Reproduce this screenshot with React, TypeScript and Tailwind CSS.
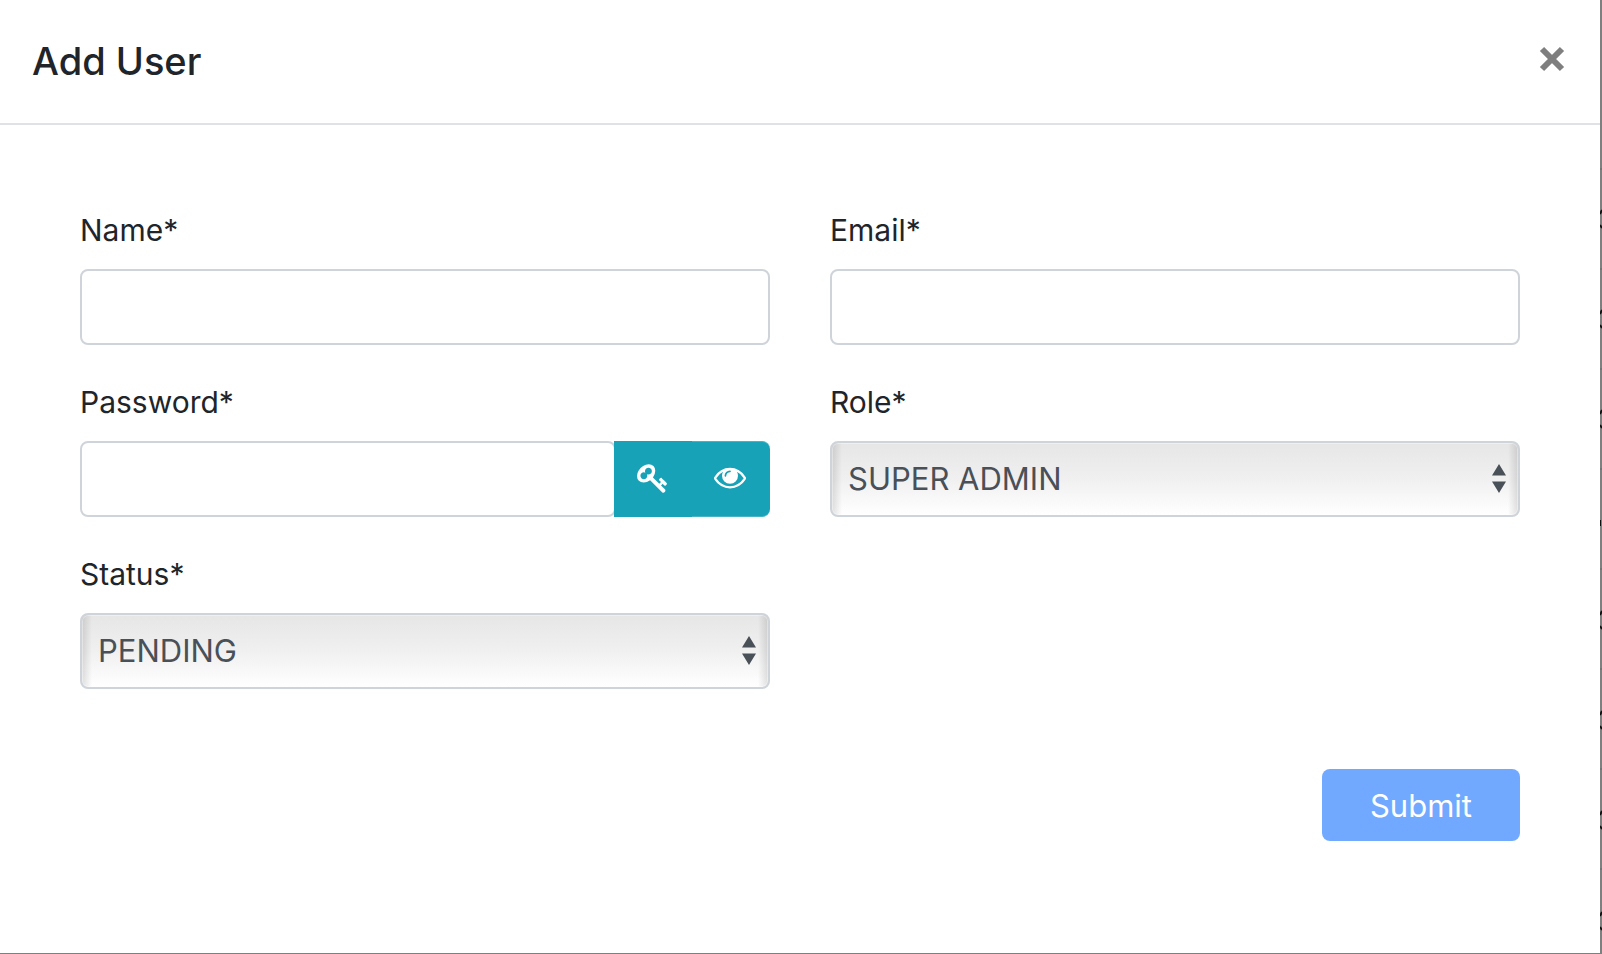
import { useState } from "react";
import type { ReactNode } from "react";

const control =
  "h-[76px] w-full min-w-0 rounded-lg border-2 border-[#ced4da] bg-white px-4 text-[31px] text-[#495057] outline-none";

function Field({ id, label, children }: { id: string; label: string; children: ReactNode }) {
  return (
    <div className="flex flex-col gap-3.5">
      <label htmlFor={id} className="text-[30px] leading-[50px]">
        {label}
      </label>
      {children}
    </div>
  );
}

function Select({ id, options }: { id: string; options: string[] }) {
  return (
    <div className="grid items-center">
      <select
        id={id}
        className="col-start-1 row-start-1 h-[76px] w-full appearance-none rounded-lg border-2 border-[#ced4da] bg-[linear-gradient(to_right,rgba(0,0,0,0.12),transparent_10px,transparent_calc(100%-10px),rgba(0,0,0,0.12)),linear-gradient(to_bottom,#e6e6e6,#f0f0f0_50%,#ffffff)] px-4 text-[31px] text-[#495057] shadow-[inset_0_0_0_1px_rgba(255,255,255,0.4)] outline-none"
      >
        {options.map((o) => (
          <option key={o}>{o}</option>
        ))}
      </select>
      <svg
        viewBox="0 0 14 29"
        aria-hidden="true"
        className="pointer-events-none col-start-1 row-start-1 mr-3.5 mb-0.5 h-[29px] w-3.5 justify-self-end fill-[#495057]"
      >
        <path d="M7 0 14 11.5H0zM7 29 14 17.5H0z" />
      </svg>
    </div>
  );
}

function KeyIcon() {
  return (
    <svg viewBox="0 0 1792 1792" className="h-8 w-8 fill-current" aria-hidden="true">
      <path d="M832 512q0-80-56-136t-136-56-136 56-56 136q0 42 19 83-41-19-83-19-80 0-136 56t-56 136 56 136 136 56 136-56 56-136q0-42-19-83 41 19 83 19 80 0 136-56t56-136zm851 704q0 17-49 66t-66 49q-9 0-28.5-16t-36.5-33-38.5-40-24.5-26l-96 96 220 220q28 28 28 68 0 42-39 81t-81 39q-40 0-68-28l-671-671q-176 131-365 131-163 0-265.5-102.5t-102.5-265.5q0-160 95-313t248-248 313-95q163 0 265.5 102.5t102.5 265.5q0 189-131 365l355 355 96-96q-3-3-26-24.5t-40-38.5-33-36.5-16-28.5q0-17 49-66t66-49q13 0 23 10 6 6 46 44.5t82 79.5 86.5 86 73 78 28.5 41z" />
    </svg>
  );
}

function EyeIcon() {
  return (
    <svg viewBox="0 0 1792 1792" className="h-8 w-8 fill-current" aria-hidden="true">
      <path d="M1664 960q-152-236-381-353 61 104 61 225 0 185-131.5 316.5t-316.5 131.5-316.5-131.5-131.5-316.5q0-121 61-225-229 117-381 353 133 205 333.5 326.5t434.5 121.5 434.5-121.5 333.5-326.5zm-720-384q0-20-14-34t-34-14q-125 0-214.5 89.5t-89.5 214.5q0 20 14 34t34 14 34-14 14-34q0-86 61-147t147-61q20 0 34-14t14-34zm848 384q0 34-20 69-140 230-376.5 368.5t-499.5 138.5-499.5-139-376.5-368q-20-35-20-69t20-69q140-229 376.5-368t499.5-139 499.5 139 376.5 368q20 35 20 69z" />
    </svg>
  );
}

const dividers = [168, 268, 368, 468, 568, 668, 768, 868];
const rows = [210, 310, 410, 611, 711, 811, 912];

/* Dimmed table that shows past the right edge of the dialog. */
function Backdrop() {
  return (
    <svg className="w-0.5 shrink-0" aria-hidden="true">
      {dividers.map((y) => (
        <rect key={y} x="0" y={y} width="2" height="2" fill="#717375" />
      ))}
      {rows.map((y) => (
        <path key={y} d={`M0 ${y + 4}L2 ${y}M0 ${y + 15}L2 ${y + 18}`} stroke="#111" strokeWidth="2" />
      ))}
      <rect x="0" y="520" width="1" height="6" fill="#111" />
    </svg>
  );
}

export default function App() {
  const [visible, setVisible] = useState(false);
  return (
    <div className="flex min-h-screen bg-[#7f7f7f] font-['Inter','Liberation_Sans',sans-serif] text-[#212529]">
      <main className="mb-px min-w-0 flex-1 bg-white">
        <header className="flex items-center justify-between border-b-2 border-[#dee2e6] p-8">
          <h1 className="text-[38px] leading-[59px] font-medium">Add User</h1>
          <button type="button" aria-label="Close" className="px-[3px] pt-1 pb-2.5">
            <svg viewBox="0 0 26 26" className="h-[26px] w-[26px]" aria-hidden="true">
              <path d="M3 3 23 23M23 3 3 23" stroke="#7f7f7f" strokeWidth="6" fill="none" />
            </svg>
          </button>
        </header>
        <form className="px-20 pt-20 pb-20" onSubmit={(e) => e.preventDefault()}>
          <div className="grid grid-cols-2 gap-x-[60px] gap-y-8">
            <Field id="name" label="Name*">
              <input id="name" type="text" className={control} />
            </Field>
            <Field id="email" label="Email*">
              <input id="email" type="email" className={control} />
            </Field>
            <Field id="password" label="Password*">
              <div className="flex">
                <input id="password" type={visible ? "text" : "password"} className={control} />
                <button
                  type="button"
                  aria-label="Generate password"
                  className="-ml-0.5 flex w-[78px] shrink-0 items-center justify-center bg-[#17a2b8] pb-0.5 text-white"
                >
                  <KeyIcon />
                </button>
                <button
                  type="button"
                  aria-label="Show password"
                  onClick={() => setVisible(!visible)}
                  className="flex w-[78px] shrink-0 items-center justify-center rounded-r-lg border-y border-[#45b5c6] bg-[#17a2b8] pr-0.5 pb-1 text-white"
                >
                  <EyeIcon />
                </button>
              </div>
            </Field>
            <Field id="role" label="Role*">
              <Select id="role" options={["SUPER ADMIN", "ADMIN", "USER"]} />
            </Field>
            <Field id="status" label="Status*">
              <Select id="status" options={["PENDING", "ACTIVE", "INACTIVE"]} />
            </Field>
          </div>
          <div className="flex justify-end pt-20">
            <button type="submit" className="h-[72px] w-[198px] rounded-lg bg-[#70a9ff] pt-0.5 text-[31px] text-white">
              Submit
            </button>
          </div>
        </form>
      </main>
      <Backdrop />
    </div>
  );
}
